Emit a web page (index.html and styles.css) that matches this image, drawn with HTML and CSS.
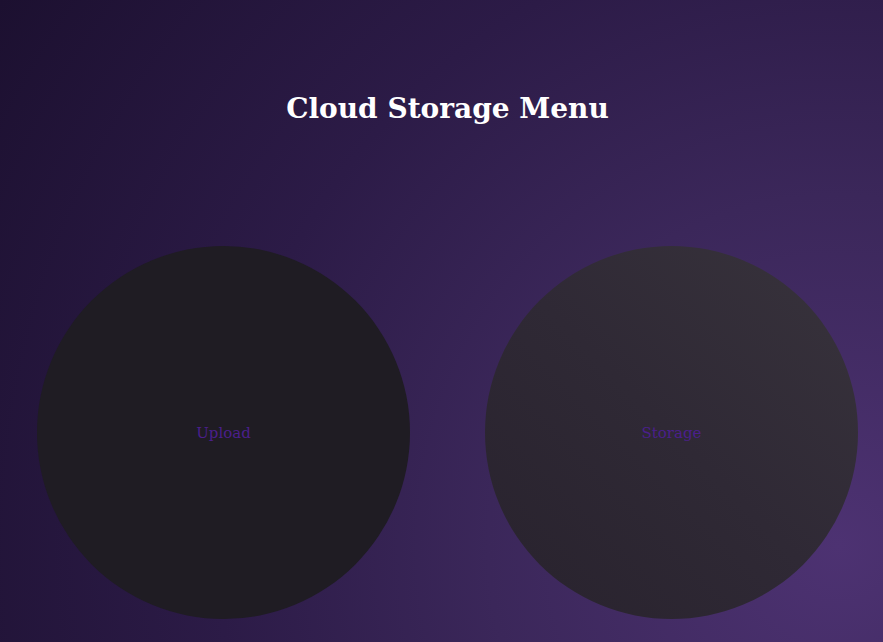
FILE: index.html
```html
<!DOCTYPE html>
<html lang="en">
  <head>
    <meta name="viewport" content="width=device-width, initial-scale=1.0" />
    <title>Cloud Storage Menu</title>
    <link rel="stylesheet" href="styles.css">
  </head>

  <body>
    <div class="page">
      <h1 class="title">Cloud Storage Menu</h1>
      <div class="menu">
        <div class="circle upload">
          <span>Upload</span>
        </div>
        <div class="circle storage">
          <span>Storage</span>
        </div>
      </div>
    </div>
  </body>
</html>
```

FILE: styles.css
```css
* {
  padding: 0;
  margin: 0;
  box-sizing: border-box;
  font-family: "DejaVu Serif", serif;
}

html,
body {
  height: 100%;
}

body {
  background: radial-gradient(
    circle farthest-corner at 95% 85%,
    #4d3272 0%,
    #3b275a 35%,
    #2c1b47 62%,
    #1c1030 100%
  );
  overflow: hidden;
}

.page {
  height: 100%;
  display: flex;
  flex-direction: column;
  padding-left: 12px;
}

.title {
  color: #ffffff;
  font-size: 28px;
  font-weight: bold;
  text-align: center;
  margin-top: 89px;
  line-height: 40px;
}

.menu {
  display: flex;
  justify-content: center;
  gap: 75px;
  margin-top: 117px;
}

.circle {
  width: 373px;
  height: 373px;
  border-radius: 50%;
  display: flex;
  align-items: center;
  justify-content: center;
}

.circle span {
  color: #4b1f8c;
  font-size: 15px;
}

.upload {
  background: #1f1c23;
}

.storage {
  background: linear-gradient(45deg, #28222d 0%, #2f2935 50%, #38333c 100%);
}
```
